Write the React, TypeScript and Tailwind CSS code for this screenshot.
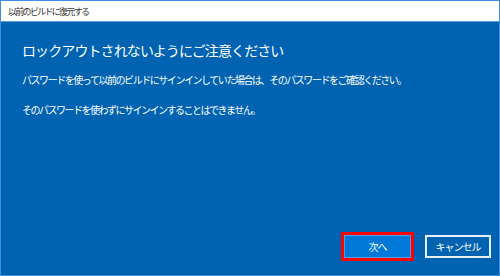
import React from "react";

const jp = { fontFamily: '"Noto Sans CJK JP", "Noto Sans", sans-serif' };

export default function App() {
  return (
    <div
      style={jp}
      className="w-[500px] h-[276px] flex flex-col bg-[#0063b1] border border-[#3d8fe0] overflow-hidden"
    >
      <div className="h-[21px] shrink-0 bg-white border-b border-[#5f9fdc] flex items-center pl-[7px]">
        <span className="text-[9px] leading-none tracking-[-1.7px] text-[#333333]">
          以前のビルドに復元する
        </span>
      </div>
      <div className="flex flex-col px-[21px] text-white">
        <div className="mt-[18px] h-[20px] leading-[20px] text-[14px] tracking-[-0.9px] whitespace-nowrap">
          ロックアウトされないようにご注意ください
        </div>
        <div className="mt-[13px] h-[14px] leading-[14px] text-[10px] tracking-[-1.45px] whitespace-nowrap">
          パスワードを使って以前のビルドにサインインしていた場合は、そのパスワードをご確認ください。
        </div>
        <div className="mt-[16px] h-[14px] leading-[14px] text-[10px] tracking-[-1.5px] whitespace-nowrap">
          そのパスワードを使わずにサインインすることはできません。
        </div>
      </div>
      <div className="mt-auto mb-[14px] flex justify-end items-center pr-[8px] gap-[11px]">
        <div className="border-[3px] border-[#ff0000]">
          <div className="w-[67px] h-[23px] bg-[#0078d7] border border-[#4c9de6] flex items-center justify-center text-white text-[10px] tracking-[-1px]">
            次へ
          </div>
        </div>
        <div className="w-[66px] h-[23px] border-2 border-[#e8eef5] flex items-center justify-center text-white text-[10px] tracking-[-1px]">
          キャンセル
        </div>
      </div>
    </div>
  );
}
